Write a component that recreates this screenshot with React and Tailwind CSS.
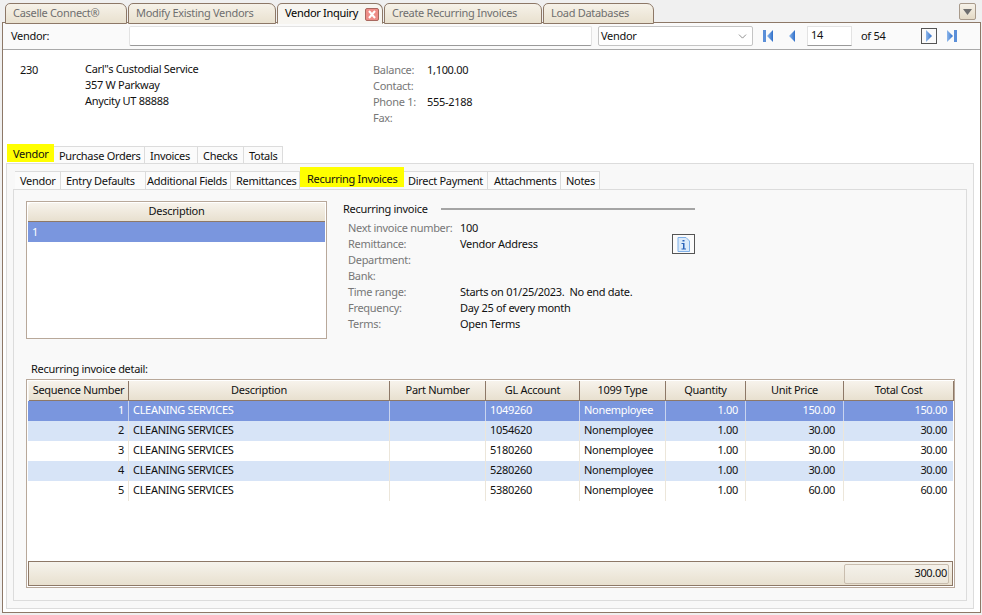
import { ChevronDown } from "lucide-react"

const docTabs = [
  { name: "Caselle Connect®", w: "w-[122px]" },
  { name: "Modify Existing Vendors", w: "w-[148px]" },
  { name: "Vendor Inquiry", w: "w-[106px]", active: true },
  { name: "Create Recurring Invoices", w: "w-[158px]" },
  { name: "Load Databases", w: "w-[111px]" },
]
const outerTabs = ["Purchase Orders", "Invoices", "Checks", "Totals"]
const innerTabs = [
  { name: "Vendor", w: "w-[46px] pl-[5px]" },
  { name: "Entry Defaults", w: "w-[85px] pl-[5px]" },
  { name: "Additional Fields", w: "w-[85px] pl-[1px]" },
  { name: "Remittances", w: "w-[69px] pl-[5px]" },
  { name: "Recurring Invoices", w: "w-[104px]", on: true },
  { name: "Direct Payment", w: "w-[84px] pl-[4px]" },
  { name: "Attachments", w: "w-[73px] pl-[6px]" },
  { name: "Notes", w: "w-[39px] pl-[5px]" },
]
const recurring = [
  ["Next invoice number:", "100"],
  ["Remittance:", "Vendor Address"],
  ["Department:", ""],
  ["Bank:", ""],
  ["Time range:", "Starts on 01/25/2023.  No end date."],
  ["Frequency:", "Day 25 of every month"],
  ["Terms:", "Open Terms"],
]
const cols = "grid grid-cols-[100px_261px_96px_94px_86px_80px_98px_110px]"
const rows = [
  [1, "1049260", "150.00", "150.00"],
  [2, "1054620", "30.00", "30.00"],
  [3, "5180260", "30.00", "30.00"],
  [4, "5280260", "30.00", "30.00"],
  [5, "5380260", "60.00", "60.00"],
]

function NavIcon({ type, boxed }) {
  return (
    <div className={"w-[16px] h-[16px] flex items-center justify-center " + (boxed ? "border border-[#555]" : "")}>
      <svg width="14" height="14" viewBox="0 0 14 14">
        <defs>
          <linearGradient id={"g" + type} x1="0" y1="0" x2="1" y2="0">
            <stop offset="0" stopColor="#8fb8ec" />
            <stop offset="1" stopColor="#2f6fc9" />
          </linearGradient>
        </defs>
        {type == "first" && <rect x="1" y="1" width="3" height="12" fill="#5b8fd8" />}
        {(type == "first" || type == "prev") && <path d={type == "first" ? "M11 1v12L5 7z" : "M10 1v12L4 7z"} fill={"url(#g" + type + ")"} />}
        {(type == "last" || type == "next") && <path d={type == "last" ? "M3 1v12l6-6z" : "M4 1v12l6-6z"} fill={"url(#g" + type + ")"} />}
        {type == "last" && <rect x="10" y="1" width="3" height="12" fill="#5b8fd8" />}
      </svg>
    </div>
  )
}

function DocTab({ tab }) {
  return (
    <div className={tab.w + " h-[21px] relative top-px flex items-center pl-[7px] pb-[2px] mr-px whitespace-nowrap border border-[#8d7867] rounded-t-[5px] rounded-tr-[7px] " + (tab.active ? "z-10 border-b-[#f7f5f0] bg-[#f7f5f0] text-black" : "bg-gradient-to-b from-[#f6f2e9] to-[#e9e1cf] text-[#6f6f6f]")}>
      {tab.name}
      {tab.active && (
        <div className="absolute right-[3px] top-[4px] w-[14px] h-[13px] rounded-[2px] border border-[#a8685f] bg-[#ee8d88] flex items-center justify-center">
          <svg width="10" height="9" viewBox="0 0 10 9"><path d="M2 1l6 7M8 1L2 8" stroke="#fff" strokeWidth="2" /></svg>
        </div>
      )}
    </div>
  )
}

function App() {
  return (
    <div className="w-[982px] h-[615px] bg-[#f0f0f0] text-[11px] tracking-[-0.3px] leading-[16px] text-[#111] overflow-hidden" style={{ fontFamily: '"Noto Sans", "DejaVu Sans", sans-serif' }}>
      {/* document tabs */}
      <div className="h-[22px] pt-[2px] pl-[5px] pr-[6px] flex items-start relative">
        {docTabs.map((t) => <DocTab key={t.name} tab={t} />)}
        <div className="ml-auto mt-px w-[17px] h-[17px] border border-[#a89a8b] rounded-[2px] bg-gradient-to-b from-[#f6f2e9] to-[#e4dac6] flex items-center justify-center">
          <svg width="9" height="6" viewBox="0 0 9 6"><path d="M0 0h9L4.500 6z" fill="#6e6e6e" /></svg>
        </div>
      </div>

      <div className="ml-[2px] w-[979px] h-[591px] border border-[#8d7867] bg-white flex flex-col">
        {/* search bar */}
        <div className="h-[27px] shrink-0 border-b border-[#a9a9a9] bg-[#fafafa] flex items-center">
          <span className="w-[126px] pl-[8px]">Vendor:</span>
          <div className="w-[463px] h-[20px] bg-white border border-[#e3e3e3] border-b-[#9a9a9a] rounded-[2px]"></div>
          <div className="ml-[6px] w-[155px] h-[20px] bg-white border border-[#c4c4c4] rounded-[2px] flex items-center justify-between pl-[2px] pr-[3px]">
            Vendor
            <ChevronDown size={13} strokeWidth={1.2} color="#555" />
          </div>
          <div className="ml-[8px]"><NavIcon type="first" /></div>
          <div className="ml-[7px]"><NavIcon type="prev" /></div>
          <div className="ml-[7px] w-[45px] h-[20px] bg-white border border-[#e3e3e3] border-b-[#9a9a9a] pl-[3px]">14</div>
          <span className="ml-[9px] w-[60px]">of 54</span>
          <NavIcon type="next" boxed />
          <div className="ml-[6px]"><NavIcon type="last" /></div>
        </div>

        {/* vendor summary */}
        <div className="h-[93px] shrink-0 flex pt-[12px]">
          <span className="w-[82px] pl-[17px]">230</span>
          <div className="w-[288px] -mt-px">
            <div>Carl"s Custodial Service</div>
            <div>357 W Parkway</div>
            <div>Anycity UT 88888</div>
          </div>
          <div className="grid grid-cols-[54px_auto] h-fit">
            <span className="text-[#777]">Balance:</span><span>1,100.00</span>
            <span className="text-[#777]">Contact:</span><span></span>
            <span className="text-[#777]">Phone 1:</span><span>555-2188</span>
            <span className="text-[#777]">Fax:</span><span></span>
          </div>
        </div>

        {/* outer tabs */}
        <div className="h-[20px] shrink-0 flex items-end pl-[4px] relative z-10">
          <div className="w-[47px] h-[18px] mb-px bg-[#ffff00] pl-[6px] pt-[2px] mr-0">Vendor</div>
          {outerTabs.map((t, i) => (
            <div key={t} className={"h-[17px] border border-b-0 border-l-0 border-[#dcdcdc] bg-[#fbfbfb] pl-[5px] pt-px whitespace-nowrap " + ["w-[91px]", "w-[53px]", "w-[46px]", "w-[39px]"][i]}>{t}</div>
          ))}
        </div>
        <div className="ml-[3px] mr-[6px] mb-[3px] flex-1 border border-[#dcdcdc] bg-[#f8f8f8] px-[6px] pt-[3px] pb-[7px] flex flex-col min-h-0">
          {/* inner tabs */}
          <div className="h-[22px] shrink-0 flex items-end pl-[2px]">
            {innerTabs.map((t) =>
              t.on ? (
                <div key={t.name} className={t.w + " h-[20px] mb-[2px] bg-[#ffff00] pl-[7px] pt-[4px] whitespace-nowrap"}>{t.name}</div>
              ) : (
                <div key={t.name} className={t.w + " h-[18px] border border-b-0 border-l-0 border-[#dcdcdc] bg-[#fbfbfb] pt-px whitespace-nowrap"}>{t.name}</div>
              )
            )}
          </div>
          <div className="flex-1 border border-[#dcdcdc] bg-[#f9f9f9] pl-[12px] pt-[11px] flex flex-col min-h-0">
            <div className="flex h-[139px] shrink-0">
              {/* description list */}
              <div className="w-[301px] h-[138px] border border-[#b8a89a] bg-white p-px">
                <div className="h-[19px] rounded-tl-[4px] bg-gradient-to-b from-[#f7f3ec] to-[#e8e0cf] border-b border-[#8d7867] text-center">Description</div>
                <div className="h-[20px] bg-[#7a96de] text-white pl-[4px] pt-[2px]">1</div>
              </div>
              {/* recurring invoice */}
              <div className="ml-[16px] w-[352px] relative">
                <div className="flex items-center">
                  <span className="w-[98px] shrink-0">Recurring invoice</span>
                  <div className="flex-1 h-[2px] bg-[#a5a5a5]"></div>
                </div>
                <div className="mt-[3px] pl-[5px] grid grid-cols-[112px_auto]">
                  {recurring.map(([label, val]) => (
                    <div key={label} className="contents">
                      <span className="text-[#777] whitespace-nowrap">{label}</span>
                      <span className="whitespace-pre">{val}</span>
                    </div>
                  ))}
                </div>
                <div className="absolute right-0 top-[33px] w-[23px] h-[20px] border border-[#555] flex items-center justify-center bg-[#fbfbfb]">
                  <svg width="13" height="15" viewBox="0 0 13 15">
                    <path d="M1 .5h8l3.500 3.500v10.500H1z" fill="#dbeafa" stroke="#7fb0e8" />
                    <path d="M5.500 3h2v1.500h-2zM4.500 6h3v5.500h1.500v1H4.500v-1H6V7H4.500z" fill="#2a62b8" />
                  </svg>
                </div>
              </div>
            </div>

            <div className="mt-[21px] h-[18px] pl-[5px] shrink-0">Recurring invoice detail:</div>
            {/* detail grid */}
            <div className="w-[929px] h-[209px] border border-[#b8a89a] p-px flex flex-col bg-white">
              <div className={cols + " h-[20px] shrink-0 bg-[#f7f5f0] pl-px"}>
                {["Sequence Number", "Description", "Part Number", "GL Account", "1099 Type", "Quantity", "Unit Price", "Total Cost"].map((h, i) => (
                  <div key={h} className={"bg-gradient-to-b from-[#f7f3ec] to-[#e8e0cf] border-r border-b border-[#8d7867] text-center whitespace-nowrap pt-px " + (i == 0 ? "rounded-tl-[4px]" : "")}>{h}</div>
                ))}
              </div>
              <div className="flex-1 min-h-0">
                {rows.map(([n, gl, price, total]) => {
                  const sel = n == 1
                  const bg = sel ? "bg-[#7a96de] text-white" : n % 2 == 0 ? "bg-[#d7e4f7]" : "bg-white"
                  const line = sel ? "border-r border-[#c9d4ef]" : "border-r border-[#ece6da]"
                  return (
                    <div key={n} className={cols + " h-[20px] pl-px " + bg}>
                      <div className={line + " text-right pr-[4px] pt-[1px]"}>{n}</div>
                      <div className={line + " pl-[4px] pt-[1px]"}>CLEANING SERVICES</div>
                      <div className={line}></div>
                      <div className={line + " pl-[4px] pt-[1px]"}>{gl}</div>
                      <div className={line + " pl-[4px] pt-[1px]"}>Nonemployee</div>
                      <div className={line + " text-right pr-[7px] pt-[1px]"}>1.00</div>
                      <div className={line + " text-right pr-[8px] pt-[1px]"}>{price}</div>
                      <div className="text-right pr-[7px] pt-[1px]">{total}</div>
                    </div>
                  )
                })}
              </div>
              <div className="h-[25px] shrink-0 border border-[#8d7867] bg-gradient-to-b from-[#f6f3ec] to-[#e8e0cf] flex justify-end items-center pr-[3px]">
                <div className="w-[105px] h-[20px] border border-[#c9bdae] rounded-[2px] bg-gradient-to-b from-[#f4f1ea] to-[#ece6da] text-right pr-px">300.00</div>
              </div>
            </div>
          </div>
        </div>
      </div>
    </div>
  )
}
export default App
